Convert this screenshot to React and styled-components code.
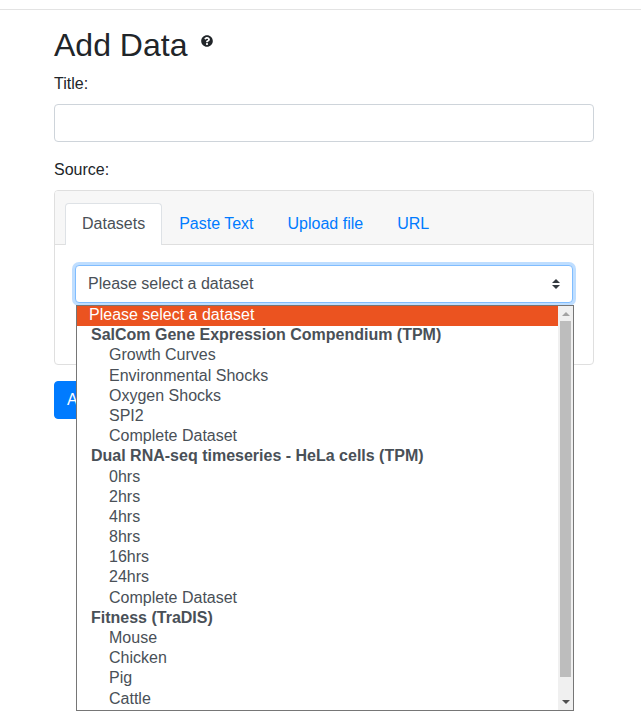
import React from 'react'
import styled, { createGlobalStyle } from 'styled-components'
import { FaQuestionCircle } from 'react-icons/fa'

const GlobalStyle = createGlobalStyle`
  * { box-sizing: border-box; }
  html, body { margin: 0; padding: 0; background: #fff; }
  body {
    font-family: "Liberation Sans", Arial, sans-serif;
    font-size: 16px;
    line-height: 24px;
    color: #212529;
  }
  #root { min-height: 727px; }
`

const TopBar = styled.div`
  height: 10px;
  border-bottom: 1px solid #e3e3e3;
`
const Container = styled.main`
  padding: 0 47px 0 54px;
`
const Heading = styled.h1`
  display: flex;
  align-items: flex-start;
  gap: 14px;
  height: 38px;
  margin: 16px 0 8px;
  font-size: 32px;
  font-weight: 400;
  line-height: 38px;
  svg { margin-top: 9px; }
`
const Label = styled.label`
  display: block;
  height: 24px;
  margin-bottom: 8px;
`
const TextInput = styled.input`
  display: block;
  width: 100%;
  height: 38px;
  margin-bottom: 16px;
  border: 1px solid #ced4da;
  border-radius: 4px;
`
const Card = styled.section`
  height: 175px;
  margin-bottom: 16px;
  border: 1px solid #dfdfdf;
  border-radius: 4px;
`
const TabBar = styled.nav`
  display: flex;
  height: 54px;
  padding: 12px 10px 0;
  background: #f7f7f7;
  border-bottom: 1px solid #dfdfdf;
  border-radius: 3px 3px 0 0;
`
const Tab = styled.a`
  height: 42px;
  padding: 8px 16px;
  border: 1px solid ${p => (p.$active ? '#dee2e6' : 'transparent')};
  border-bottom: 0;
  border-radius: 4px 4px 0 0;
  background: ${p => (p.$active ? '#fff' : 'transparent')};
  color: ${p => (p.$active ? '#495057' : '#007bff')};
`
const CardBody = styled.div`
  padding: 20px;
`
const SelectWrap = styled.div`
  position: relative;
`
const SelectBox = styled.div`
  display: flex;
  align-items: center;
  justify-content: space-between;
  height: 38px;
  padding: 0 12px;
  border: 1px solid #80bdff;
  border-radius: 4px;
  box-shadow: 0 0 0 3px rgba(0, 123, 255, 0.25);
  color: #495057;
  background: #fff;
`
const Dropdown = styled.div`
  position: absolute;
  top: 40px;
  left: 1px;
  right: -1px;
  height: 406px;
  display: flex;
  background: #fff;
  border: 1px solid #767676;
  overflow: hidden;
  z-index: 2;
`
const OptionList = styled.ul`
  flex: 1;
  min-width: 0;
  margin: 0;
  padding: 0;
  list-style: none;
  overflow: hidden;
`
const Option = styled.li`
  height: 20.2px;
  line-height: 17px;
  white-space: nowrap;
  color: ${p => (p.$selected ? '#fff' : '#495057')};
  background: ${p => (p.$selected ? '#eb5320' : 'transparent')};
  font-weight: ${p => (p.$group ? 700 : 400)};
  padding-left: ${p => (p.$group ? 14 : p.$child ? 32 : 12)}px;
`
const Scrollbar = styled.div`
  position: relative;
  flex: 0 0 15px;
  background: #f0f0f0;
`
const Thumb = styled.div`
  position: absolute;
  top: 15px;
  left: 2px;
  width: 11px;
  height: 356px;
  background: #bdbdbd;
`
const Arrow = styled.div`
  position: absolute;
  left: 4px;
  ${p => (p.$down ? 'bottom: 6px;' : 'top: 6px;')}
  width: 0;
  height: 0;
  border-left: 4px solid transparent;
  border-right: 4px solid transparent;
  ${p => (p.$down ? 'border-top: 4px solid #505050;' : 'border-bottom: 4px solid #a3a3a3;')}
`
const AddButton = styled.button`
  display: block;
  height: 38px;
  padding: 0 12px;
  border: 1px solid #007bff;
  border-radius: 4px;
  background: #007bff;
  color: #fff;
  font: inherit;
`

const options = [
  { label: 'Please select a dataset', selected: true },
  { label: 'SalCom Gene Expression Compendium (TPM)', group: true },
  { label: 'Growth Curves', child: true },
  { label: 'Environmental Shocks', child: true },
  { label: 'Oxygen Shocks', child: true },
  { label: 'SPI2', child: true },
  { label: 'Complete Dataset', child: true },
  { label: 'Dual RNA-seq timeseries - HeLa cells (TPM)', group: true },
  { label: '0hrs', child: true },
  { label: '2hrs', child: true },
  { label: '4hrs', child: true },
  { label: '8hrs', child: true },
  { label: '16hrs', child: true },
  { label: '24hrs', child: true },
  { label: 'Complete Dataset', child: true },
  { label: 'Fitness (TraDIS)', group: true },
  { label: 'Mouse', child: true },
  { label: 'Chicken', child: true },
  { label: 'Pig', child: true },
  { label: 'Cattle', child: true },
]

const tabs = ['Datasets', 'Paste Text', 'Upload file', 'URL']

export default function App() {
  return (
    <>
      <GlobalStyle />
      <TopBar />
      <Container>
        <Heading>
          Add Data
          <FaQuestionCircle size={12} color="#212529" />
        </Heading>
        <Label>Title:</Label>
        <TextInput type="text" />
        <Label>Source:</Label>
        <Card>
          <TabBar>
            {tabs.map((t, i) => (
              <Tab key={t} $active={i === 0}>{t}</Tab>
            ))}
          </TabBar>
          <CardBody>
            <SelectWrap>
              <SelectBox>
                Please select a dataset
                <svg width="8" height="10" viewBox="0 0 4 5">
                  <path fill="#343a40" d="M2 0L0 2h4zm0 5L0 3h4z" />
                </svg>
              </SelectBox>
              <Dropdown>
                <OptionList>
                  {options.map((o, i) => (
                    <Option key={i} $selected={o.selected} $group={o.group} $child={o.child}>
                      {o.label}
                    </Option>
                  ))}
                </OptionList>
                <Scrollbar>
                  <Arrow />
                  <Thumb />
                  <Arrow $down />
                </Scrollbar>
              </Dropdown>
            </SelectWrap>
          </CardBody>
        </Card>
        <AddButton>Add</AddButton>
      </Container>
    </>
  )
}
